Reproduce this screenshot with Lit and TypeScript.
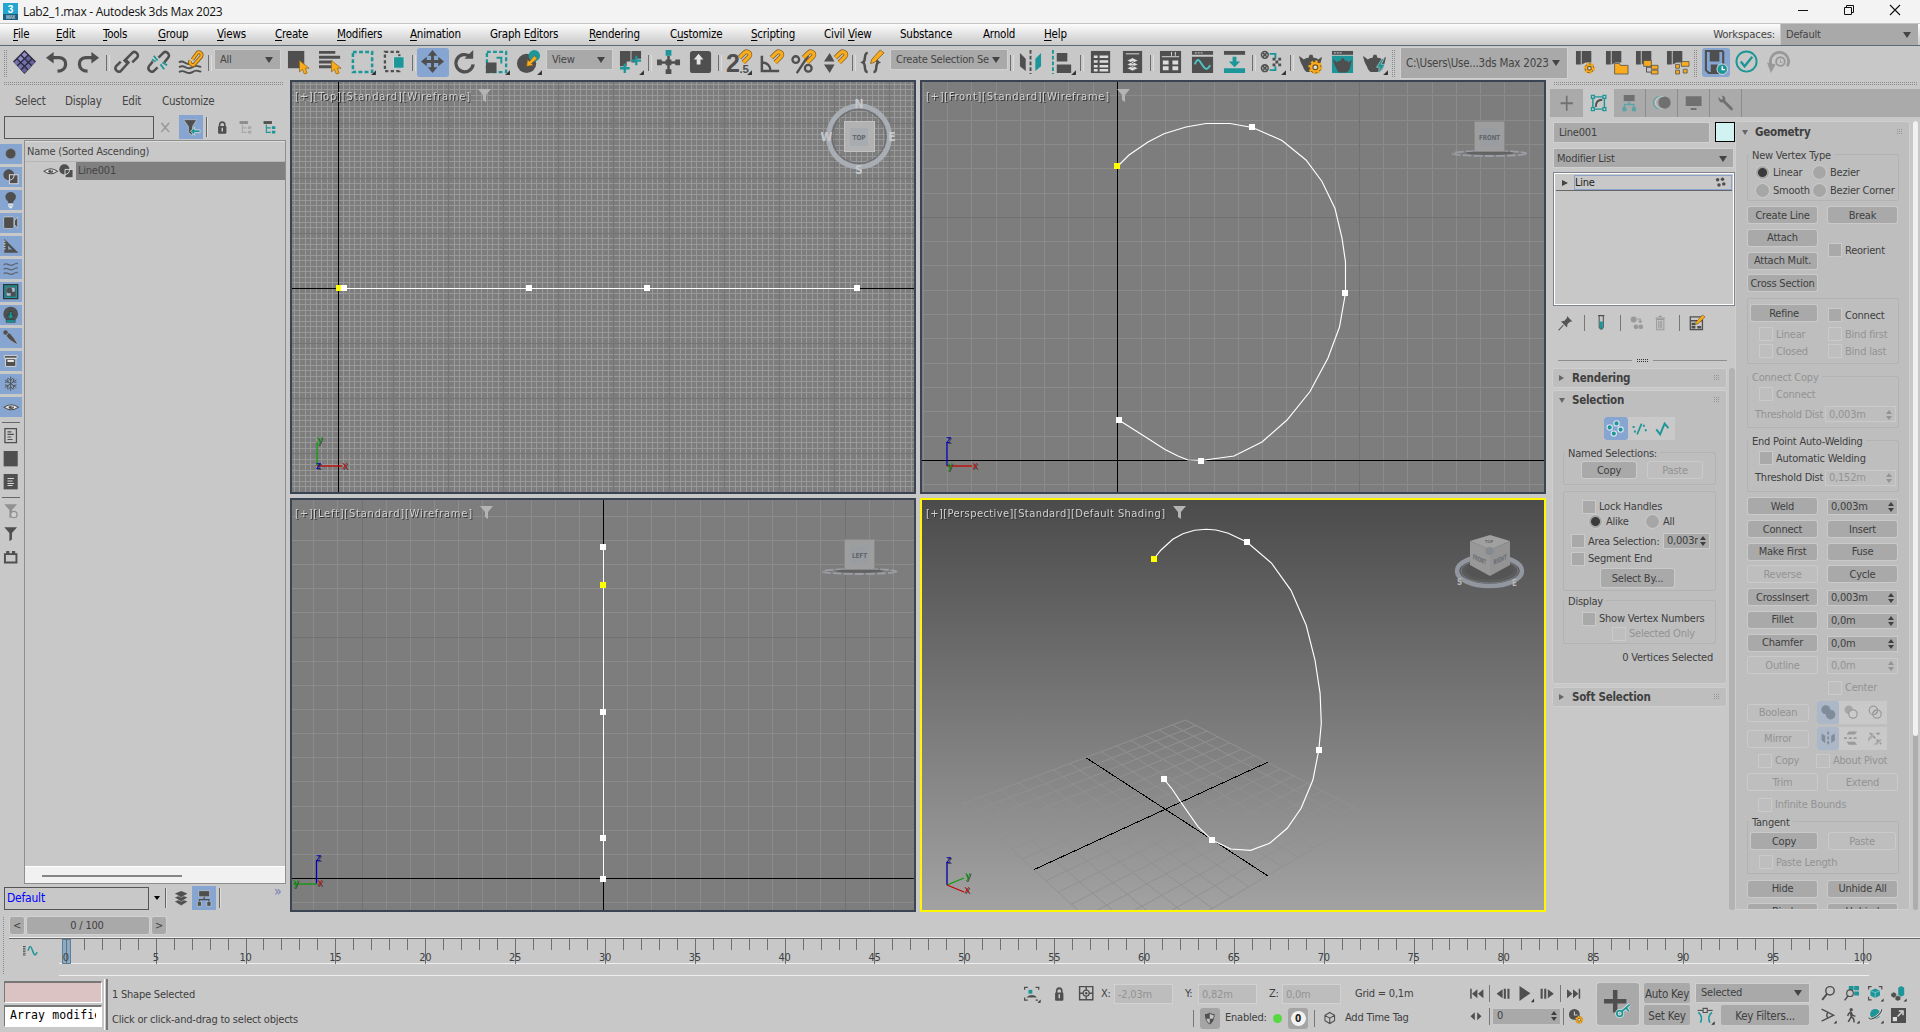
import { LitElement, html, svg, css } from "lit";
import { customElement, property } from "lit/decorators.js";

const D = "#4f4f4f";
const T = "#1c9698";
const Y = "#f9ab1c";
const L = "#d8d8d8";

const teapot = (c: string) => svg`<path d="M0 6l5 4c1-1 3-2 5-2l1-3h3l1 3c3 0 4 1 5 2l4-3-2 9c-1 4-3 6-5 7H8c-2-1-3-3-4-6C2 14 1 11 0 6z" fill=${c}/>`;
const gear = (x: number, y: number, r: number) => svg`<circle cx=${x} cy=${y} r=${r} fill=${Y} stroke="#6b5524" stroke-width="1" /><circle cx=${x} cy=${y} r=${r} fill="none" stroke=${Y} stroke-width="2.600" stroke-dasharray="2.200 2.400"/><circle cx=${x} cy=${y} r=${r * 0.42} fill="#ddd" stroke="#6b5524" stroke-width="1.2"/>`;
const magnet = svg`<path d="M13 8L18 3c3-3 8 1 5 4l-6 6" fill="none" stroke="#7a5a20" stroke-width="4.8"/><path d="M13 8L18 3c3-3 8 1 5 4l-6 6" fill="none" stroke=${Y} stroke-width="3.4"/>`;
const cursor = svg`<path d="M13 11v12l3-3 2 5 3-1-2-5h4z" fill=${Y} stroke="#9a6a10" stroke-width=".8"/>`;
const script = svg`<path d="M1 1h5v14H1zM7 1h10v12h-6l-4 2z" fill=${D}/>`;
const eye = svg`<path d="M0 12Q12-2 24 12Q12 26 0 12z" fill="#e6e6e6" stroke=${D} stroke-width="2.600"/><circle cx="12" cy="12" r="4.600" fill=${D}/><circle cx="13.500" cy="10.500" r="1.500" fill="#fff"/>`;
const shapes = svg`<circle cx="9" cy="9" r="8.500" fill=${D}/><path d="M10 9h13.500v14H10z" fill=${D} stroke=${L} stroke-width="1.6"/><path d="M17.500 9a8.500 8.500 0 0 1-7.500 8.500" fill="none" stroke=${L} stroke-width="1.6"/>`;
const funnel = svg`<path d="M2 2h20l-8 9v10l-4 3V11z" fill=${D}/>`;
const tree = (c: string) => svg`<path d="M1 2h15v5H1z" fill=${D}/><path d="M6 8v14h8M6 14h8" fill="none" stroke=${c} stroke-width="2"/><path d="M16 11h6v5h-6zM16 19h6v5h-6z" fill=${c}/>`;
const flyout = svg`<path d="M26 21v5h-5z" fill="#333"/>`;

const ICONS: Record<string, unknown> = {
  diamond: svg`<path d="M12 0l12 12-12 13L0 12z" fill="#2d2b3a"/><g fill="#8f8cc8"><path d="M12 2l3 3-3 3-3-3zM8 6l3 3-3 3-3-3z"/><path d="M4 10l3 3-3 3-3-3zM12 10l3 3-3 3-3-3zM16 14l3 3-3 3-3-3zM8 14l3 3-3 3-3-3z" fill="#7370b0"/><path d="M16 6l3 3-3 3-3-3zM20 10l3 3-3 3-3-3zM12 18l3 3-3 3-3-3z" fill="#66639c"/></g>`,
  undo: svg`<path d="M7 8h8c9 0 9 14-2 14" fill="none" stroke=${D} stroke-width="3.4"/><path d="M9 2v12L1 8z" fill=${D}/>`,
  redo: svg`<path d="M17 8H9c-9 0-9 14 2 14" fill="none" stroke=${D} stroke-width="3.4"/><path d="M15 2v12l8-6z" fill=${D}/>`,
  link: svg`<g fill="none" stroke=${D} stroke-width="2.6"><path d="M13 14l-3-3 8-8c3-3 8 2 5 5l-5 5"/><path d="M11 10l3 3-8 9c-3 2-7-2-5-5l5-5"/></g>`,
  unlink: svg`<g fill="none" stroke=${D} stroke-width="2.6"><path d="M12 8l5-5c3-3 8 2 5 5l-4 5"/><path d="M6 12l-4 5c-2 3 2 7 5 5l4-4"/></g><path d="M7 6l4 5M14 15l4 5M5 10l4 2M16 13l5 3" stroke=${T} stroke-width="1.8"/>`,
  bind: svg`<g fill="none" stroke=${D} stroke-width="2"><path d="M0 13c5-4 7 4 12 1M0 18c6-4 8 4 14 0s7 1 9-1M0 23c6-4 8 4 14 0s7 1 9-1"/></g><g fill="none" stroke="#8a6018" stroke-width="4"><path d="M14 10l5-7c2-2 6 1 4 4l-7 8c-2 2-6-1-4-4"/></g><path d="M14 10l5-7c2-2 6 1 4 4l-7 8c-2 2-6-1-4-4" fill="none" stroke=${Y} stroke-width="2.2"/>`,
  select: svg`<path d="M1 1h17v18H1z" fill=${D}/>${cursor}`,
  byname: svg`<path d="M0 1h17v3H0zM0 6h22v3H0zM0 11h14v3H0zM0 16h14v3H0z" fill=${D}/>${cursor}`,
  region: svg`<path d="M2 2h20v21H2z" fill="none" stroke=${T} stroke-width="2.6" stroke-dasharray="4 2.4"/>${flyout}`,
  crossing: svg`<path d="M2 2h15v20H2z" fill="none" stroke=${D} stroke-width="2.4" stroke-dasharray="3.4 2.4"/><path d="M11 7h11v12H11z" fill=${T} stroke=${L}/>`,
  move: svg`<path d="M12 0l5 6h-3.500v4.500H18V7l6 5-6 5v-3.500h-4.500V18H17l-5 6-5-6h3.500v-4.500H6V17l-6-5 6-5v3.500h4.500V6H7z" fill=${D}/>`,
  rotate: svg`<path d="M18 7a9 9 0 1 0 3 8" fill="none" stroke=${D} stroke-width="3.4"/><path d="M12 9h9V0z" fill=${D}/>`,
  scale: svg`<path d="M2 2h20v21H2z" fill="none" stroke=${T} stroke-width="2.4" stroke-dasharray="4 2.4"/><path d="M1 13h11v11H1z" fill=${D}/><path d="M12 8h5v6" fill="none" stroke=${T} stroke-width="2"/>${flyout}`,
  place: svg`<circle cx="10" cy="14" r="10" fill=${D}/><circle cx="18" cy="6" r="6" fill=${T}/><path d="M10 17l1-7 2 2 5-6 3 3-6 5 2 2z" fill=${Y} stroke="#7a5a20" stroke-width=".6"/>${flyout}`,
  pivot: svg`<path d="M1 1h11v11H8v5H1zM13 1h10v8h-6v4h-4z" fill=${D}/><path d="M6 14v10M1 19h10M18 6v10M13 11h10" stroke=${T} stroke-width="2.4"/>${flyout}`,
  manip: svg`<path d="M12 6v18M1 13h22" stroke=${D} stroke-width="2.600"/><path d="M9 0h6v6H9z" fill=${T}/><path d="M9 10h6v6H9zM0 10h5v6H0zM19 10h5v6h-5zM9 20h6v5H9z" fill=${D}/>`,
  keyb: svg`<rect x="1" y="1" width="22" height="23" rx="3" fill=${D}/><path d="M10 4l5 6h-3v5H8v-5H5z" fill="#e4e4e4"/>`,
  snap: svg`<text x="-1" y="23" font-size="26" font-weight="bold" fill=${D} font-family="Liberation Sans" textLength="13">2</text><text x="13" y="24" font-size="12" font-weight="bold" fill=${D} font-family="Liberation Sans">.5</text>${magnet}${flyout}`,
  angle: svg`<path d="M3 6v16h18M3 13c6 0 9 4 9 9" fill="none" stroke=${D} stroke-width="2.6"/>${magnet}`,
  percent: svg`<circle cx="5" cy="10" r="3.500" fill="none" stroke=${D} stroke-width="2.4"/><circle cx="18" cy="19" r="3.500" fill="none" stroke=${D} stroke-width="2.400"/><path d="M6 24L18 6" stroke=${D} stroke-width="2.4"/>${magnet}`,
  spin: svg`<path d="M1 12l6-9 5 9zM1 15h11l-5 9z" fill=${D}/>${magnet}`,
  braces: svg`<path d="M7 3c-5 0-1 8-5 10 4 2 0 10 5 10M13 23c5 0 1-8 5-10-2-1-2-3-2-5" fill="none" stroke=${D} stroke-width="2.6"/><path d="M10 14l1-4L20 0l4 3-10 10z" fill=${Y} stroke="#7a5a20" stroke-width=".8"/>`,
  mirror: svg`<path d="M1 3l6 6v13l-6-5z" fill=${D}/><path d="M23 3l-6 6v13l6-5z" fill=${T}/><path d="M12 0v25" stroke=${D} stroke-width="2" stroke-dasharray="4 2"/>`,
  align: svg`<path d="M2 0v25" stroke=${T} stroke-width="2" stroke-dasharray="4 2"/><path d="M6 3h11v9H6zM6 15h15v9H6z" fill=${D}/>${flyout}`,
  table: svg`<path d="M2 1h20v23H2z" fill=${D}/><path d="M5 7h4M5 12h4M5 17h4M5 21h4M11 7h9M11 12h9M11 17h9M11 21h9" stroke="#ddd" stroke-width="2.600"/>`,
  layers: svg`<path d="M2 1h20v23H2z" fill=${D}/><path d="M5 4h14" stroke="#ddd"/><path d="M12 8l6 3-6 3-6-3zM12 12l6 3-6 3-6-3zM12 16l6 3-6 3-6-3z" fill="#ddd" stroke=${D} stroke-width=".8"/>`,
  ribbon: svg`<path d="M1 1h22v23H1z" fill=${D}/><path d="M13 2v4M17 2v4M3 7h18" stroke="#ddd"/><path d="M4 11h6v4H4zM14 11h6v4h-6zM4 17h6v4H4zM14 17h6v4h-6z" fill="#ddd"/>`,
  curve: svg`<path d="M1 1h22v4H1zM1 7h22v17H1z" fill=${D}/><path d="M4 3h8" stroke="#ddd" stroke-dasharray="2 1"/><path d="M4 15c3-8 5-4 8 1s5 5 8 0" fill="none" stroke="#4fc3c5" stroke-width="2"/>`,
  dope: svg`<path d="M1 1h22v4H1z" fill=${D}/><path d="M1 19h22v5H1zM10 7h4v5h4l-6 6-6-6h4z" fill=${T}/>`,
  material: svg`<g stroke=${D} fill="none" stroke-width="1.6"><circle cx="4" cy="5" r="3.5"/><circle cx="4" cy="19" r="3.5"/><path d="M2 3l4 4M6 3L2 7M2 17l4 4M6 17l-4 4"/></g><path d="M9 4h6v5M9 21h6v-4" fill="none" stroke=${T} stroke-width="2"/><path d="M12 8h3v3h-3zM18 8h3v3h-3zM15 11h3v3h-3zM12 14h3v3h-3zM18 14h3v3h-3z" fill=${D}/>${flyout}`,
  teagear: svg`${teapot(D)}${gear(17, 18, 6)}`,
  teaframe: svg`<path d="M1 1h22v4H1z" fill=${D}/><path d="M1 6h22v18H1z" fill=${T}/><g transform="translate(2 4.500) scale(.82)">${teapot(D)}</g><path d="M3 3h8" stroke="#ddd" stroke-dasharray="2 1"/>`,
  teafast: svg`${teapot(D)}<path d="M20 9l-6 9h3l-1 7 7-10h-4l3-6z" fill=${T} stroke=${L} stroke-width=".6"/>${flyout}`,
  sgear: svg`${script}${gear(15, 19, 4.6)}`,
  sfolder: svg`${script}<path d="M10 14h5l1 2h8v9H10z" fill=${Y} stroke=${D} stroke-width=".8"/>`,
  sfolders: svg`${script}<path d="M9 11h8v6H9zM17 16h7v4h-7zM17 21h7v4h-7z" fill=${Y} stroke=${D} stroke-width=".8"/><path d="M12 17v6h5M12 18h5" stroke=${D} fill="none"/>`,
  stree: svg`${script}<path d="M16 12h8v5h-8zM10 15h4v4h-4zM10 21h4v4h-4zM18 20h4v4h-4z" fill=${Y} stroke=${D} stroke-width=".8"/>`,
  save: svg`<path d="M2 1h17l1 1v22H5l-3-3z" fill="none" stroke=${D} stroke-width="2.2"/><path d="M6 2h10v10H6zM7 15h7v9H7z" fill=${D}/><circle cx="19" cy="20" r="5.500" fill=${T} stroke="#ddd"/><path d="M19 17v3.500h3" stroke="#fff" fill="none" stroke-width="1.4"/>`,
  check: svg`<circle cx="12" cy="12" r="10.500" fill="none" stroke=${T} stroke-width="2"/><path d="M6 12l4 5 8-10" fill="none" stroke=${T} stroke-width="2.400"/>`,
  history: svg`<path d="M4 17a9.500 9.500 0 1 1 16 0" transform="translate(1 0)" fill="none" stroke="#999" stroke-width="3"/><path d="M0 13l9 2-5 9z" fill="#999"/><circle cx="14" cy="12" r="4.500" fill="none" stroke="#999" stroke-width="2"/><path d="M14 10v3h2" stroke="#999" fill="none"/>`,
  filter: svg`<path d="M1 1h19l-6 10v13l-6-4v-9z" fill=${D} stroke=${L} stroke-width=".8"/><path d="M25 16h-8v-4l-6 6 6 6v-4h8z" fill=${T} stroke=${L} stroke-width="1.200"/>`,
  lock: svg`<path d="M7 12V8c0-6 10-6 10 0v4" fill="none" stroke=${D} stroke-width="3"/><rect x="4" y="10" width="16" height="13" rx="2" fill=${D}/><path d="M12 13v6" stroke=${L} stroke-width="2.6"/>`,
  treeoff: svg`<g opacity=".5">${tree("#8a8a8a")}</g>`,
  treeon: tree(T),
  eye,
  shapes,
  dot: svg`<circle cx="12" cy="12" r="8" fill=${D} stroke="#999" stroke-width="1"/>`,
  bulb: svg`<path d="M8 15C-1 7 6 0 12 0s13 7 4 15v3H8z" fill=${D}/><path d="M8 19h8M8 22h8M10 24.500h4" stroke="#eee" stroke-width="1.8"/>`,
  camera: svg`<rect x="1" y="3" width="16" height="18" rx="2" fill=${D} stroke="#ddd"/><path d="M18 9l5-6v18l-5-6z" fill=${D} stroke="#ddd"/>`,
  ruler: svg`<path d="M2 1l22 22H2zM8 12v6h6z" fill=${D} fill-rule="evenodd"/><path d="M1 5h3M1 9h3M1 13h3M1 17h3" stroke="#ddd" stroke-width="1.4"/>`,
  waves: svg`<g fill="none" stroke="#5d6470" stroke-width="2"><path d="M1 6c6-5 9 4 15 0s6-2 7-2M1 13c6-5 9 4 15 0s6-2 7-2M1 20c6-5 9 4 15 0s6-2 7-2"/></g>`,
  group: svg`<path d="M1 1h22v22H1z" fill=${T} stroke="#333" stroke-width="2"/><path d="M5 5h14v14H5z" fill="#a9c0dc" stroke="#333"/><circle cx="10" cy="10" r="4.500" fill=${D}/><path d="M12 12h7v7h-7z" fill=${D}/>`,
  xref: svg`<circle cx="12" cy="11" r="11.500" fill=${D}/><path d="M10 7h4v6h4l-6 6-6-6h4zM5 20h14v4H5z" fill=${T} stroke="#222" stroke-width=".7"/>`,
  bone: svg`<circle cx="4" cy="4" r="3.500" fill=${D}/><path d="M5 9l4-5c5 4 11 12 14 19C15 19 9 15 5 9z" fill=${D} stroke="#ddd" stroke-width=".5"/>`,
  container: svg`<path d="M2 4h20v4H2zM4 9h16v12H4z" fill=${D} stroke="#eee" stroke-width="1.200"/><path d="M7 11h10v3H7z" fill="#eee"/>`,
  frozen: svg`<path d="M12 1v22M3 6l18 12M21 6L3 18M8 3l4 4 4-4M8 21l4-4 4 4M3 10l5-1-1-5M21 10l-5-1 1-5M3 14l5 1-1 5M21 14l-5 1 1 5" stroke=${D} fill="none" stroke-width="1.4"/>`,
  docline: svg`<path d="M3 1h18v22H3z" fill="none" stroke=${D} stroke-width="2"/><path d="M7 6h6M7 10h10M7 14h6M7 18h8" stroke=${D} stroke-width="1.8"/>`,
  block: svg`<path d="M1 0h22v24H1z" fill=${D}/>`,
  docdark: svg`<path d="M1 0h22v24H1z" fill=${D}/><path d="M7 7h10M7 11h8M7 15h10M7 18h8" stroke=${L} stroke-width="1.6"/>`,
  funnelgear: svg`<g opacity=".45">${funnel}<circle cx="17" cy="18" r="5" fill=${L} stroke=${D} stroke-width="2"/></g>`,
  funnel,
  brick: svg`<path d="M3 8h18v13H3z" fill="none" stroke=${D} stroke-width="3"/><path d="M5 3h5v5H5zM14 3h5v5h-5z" fill=${D}/>`,
  stack: svg`<g fill=${D} stroke=${L} stroke-width=".7"><path d="M12 13l10 4-10 6-10-6z"/><path d="M12 7l10 4-10 6-10-6z"/><path d="M12 1l10 4-10 6L2 5z"/></g>`,
  hier: svg`<path d="M4 1h16v9H4zM2 17h6v7H2zM16 17h6v7h-6z" fill=${D} stroke="#ddd" stroke-width=".8"/><path d="M12 10v4M5 17v-3h14v3" fill="none" stroke=${D} stroke-width="1.8"/>`,
  plus: svg`<path d="M12 1v22M1 12h22" stroke="#707070" stroke-width="3"/>`,
  modify: svg`<g fill="none" stroke=${T}><path d="M4 4h16v17H4z" stroke-width="2"/><path d="M2 2h4v4H2zM18 2h4v4h-4zM2 19h4v4H2zM18 19h4v4h-4z" fill="#ccc" stroke-width="1.8"/></g><path d="M8 18c0-6 3-10 9-10" fill="none" stroke=${D} stroke-width="2.600"/>`,
  hierarchy: svg`<path d="M4 0h16v9H4z" fill="#707070"/><path d="M12 9v5M5 19v-5h14v5" fill="none" stroke="#5ba3a4" stroke-width="2"/><path d="M2 18h6v6H2zM16 18h6v6h-6z" fill="#5ba3a4"/>`,
  motion: svg`<circle cx="9" cy="12" r="8.500" fill="none" stroke="#5ba3a4" stroke-width="1.500"/><circle cx="12" cy="12" r="8.500" fill="none" stroke="#ddd"/><circle cx="16" cy="12" r="8.500" fill="#707070"/>`,
  display: svg`<path d="M1 2h22v14H1zM8 19h8v3H8z" fill="#707070"/>`,
  wrench: svg`<path d="M2 3l4 4 3-2-2-4c4 0 6 3 5 7l11 11c1 3-1 4-3 3L9 11C5 12 2 9 2 3z" fill="#707070"/>`,
  pin: svg`<path d="M1 24l8-9" stroke="#555" stroke-width="1.8"/><path d="M5 9l10 10 1-6 5-4 3 0-9-9v3l-4 5z" fill="#555"/>`,
  tube: svg`<path d="M6 1h12M8 1v18q4 6 8 0V1" fill="none" stroke=${D} stroke-width="2"/><path d="M9 10h6v10q-3 4-6 0z" fill=${T}/>`,
  unique: svg`<g fill="#999"><circle cx="6" cy="6" r="5"/><circle cx="10" cy="18" r="4"/><circle cx="18" cy="18" r="4"/><path d="M12 4h6v4h3l-4 4-4-4h3V6h-4z"/></g>`,
  trash: svg`<path d="M3 5h18M9 2h6" stroke="#999" stroke-width="2"/><path d="M5 7h14v16H5zM9 9v12M12 9v12M15 9v12" fill="none" stroke="#999" stroke-width="1.800"/>`,
  config: svg`<path d="M2 3h19v20H2zM2 9h19M5 13h4v2H5zM5 18h4v2H5zM14 18h4v2h-4z" fill="none" stroke=${D} stroke-width="2"/><path d="M10 15l1-4L21 0l4 3-10 10z" fill=${Y} stroke="#7a5a20"/>`,
  verts4: svg`<g fill=${D}><circle cx="6" cy="6" r="4"/><circle cx="17" cy="5" r="4"/><circle cx="9" cy="18" r="4"/><circle cx="20" cy="16" r="4"/></g>`,
  vertex: svg`<g fill=${T} stroke="#dfe6ee" stroke-width="1.600"><circle cx="14" cy="5" r="3.900"/><circle cx="4" cy="11" r="3.900"/><circle cx="20" cy="14" r="3.900"/><circle cx="10" cy="20" r="3.900"/></g>`,
  segment: svg`<path d="M8 21l7-17" stroke=${T} stroke-width="2.600"/><path d="M1 8h3v3H1zM3 15h3v3H3zM17 6h3v3h-3zM20 13h3v3h-3z" fill=${T}/>`,
  spline: svg`<path d="M2 13l6 8 7-17 6 7" fill="none" stroke=${T} stroke-width="3"/>`,
  union: svg`<circle cx="8" cy="8" r="7.500" fill="#808c9a"/><circle cx="16" cy="16" r="8" fill="#808c9a"/><path d="M8 15L15 8l3 3-7 7z" fill="#808c9a"/>`,
  subtract: svg`<circle cx="8" cy="8" r="7" fill="#a6a6a6"/><circle cx="15" cy="15" r="7" fill="#cbcbcb" stroke="#999" stroke-width="2"/>`,
  intersect: svg`<g fill="none" stroke="#999" stroke-width="2"><circle cx="9" cy="9" r="7"/><circle cx="15" cy="15" r="7"/><path d="M8 13l5-5M11 16l5-5"/></g>`,
  mirh: svg`<path d="M1 4l6 4v12l-6-4zM23 4l-6 4v12l6-4z" fill="#808c9a"/><path d="M12 1v23" stroke="#808c9a" stroke-width="3" stroke-dasharray="5 3"/>`,
  mirv: svg`<path d="M4 6l4-5h14l-4 5zM4 18l4 5h14l-4-5z" fill="#9a9a9a"/><path d="M0 12h24" stroke="#9a9a9a" stroke-width="3" stroke-dasharray="5 3"/>`,
  mirb: svg`<path d="M0 12L9 3v6l-9 9zM9 23l9-9h6l-9 9z" fill="#9a9a9a" opacity=".6"/><path d="M12 3h9l-4 4z" fill="#9a9a9a"/><path d="M3 3l19 19" stroke="#9a9a9a" stroke-width="3" stroke-dasharray="5 3"/>`,
  isolate: svg`<path d="M1 6V2h5M18 2h5v4M1 18v4h5M18 22h4" fill="none" stroke=${D} stroke-width="2"/><path d="M7 6h6v6H7z" fill=${T}/><path d="M4 18c5-5 12-5 16 0z" fill=${D}/>${flyout}`,
  absolute: svg`<path d="M1 1h22v22H1zM12 1v22M1 12h22" fill="none" stroke=${D} stroke-width="2.400"/><circle cx="12" cy="12" r="5" fill="#c8c8c8" stroke=${D} stroke-width="2"/><circle cx="12" cy="12" r="2" fill=${D}/>`,
  shield: svg`<path d="M12 1c3 2 6 3 10 3 0 10-3 16-10 20C5 20 2 14 2 4c4 0 7-1 10-3z" fill=${D}/><path d="M12 3c3 2 5 3 8 3 0 3 0 5-1 7h-7zM12 13v9c-4-2-6-5-7-9z" fill="#c4c4c4"/>`,
  cube: svg`<path d="M12 1l10 6v11l-10 6-10-6V7zM2 7l10 6 10-6M12 13v11" fill="none" stroke=${D} stroke-width="2.200"/>`,
  start: svg`<path d="M2 3h2.500v18H2zM14 4v16L5 12zM24 4v16l-9-8z" fill=${D}/>`,
  prev: svg`<path d="M11 4v16L1 12zM13 3h3.500v18H13zM19 3h3.500v18H19z" fill=${D}/>`,
  play: svg`<path d="M1 0l21 12L1 25z" fill=${D}/><path d="M29 21v6h-6z" fill="#333"/>`,
  next: svg`<path d="M13 4v16l10-8zM1 3h3.500v18H1zM7 3h3.500v18H7z" fill=${D}/>`,
  end: svg`<path d="M22 3h-2.500v18H22zM10 4v16l9-8zM0 4v16l9-8z" fill=${D}/>`,
  keymode: svg`<path d="M10 3v18L1 12zM15 3v18l9-9z" fill=${D}/>`,
  timecfg: svg`<circle cx="9" cy="9" r="9" fill=${D}/><path d="M9 4v6h5" stroke="#ccc" stroke-width="1.800" fill="none"/>${gear(17, 18, 5.5)}`,
  bigkey: svg`<path d="M8 0h4v8h8v4h-8v8H8v-8H0V8h8z" fill=${D}/><g fill="none" stroke="#e3e3e3" stroke-width="3"><circle cx="14" cy="21" r="2.500"/><path d="M16 19l7-6M20 16l2 3"/></g><g fill="none" stroke=${T} stroke-width="1.600"><circle cx="14" cy="21" r="2.500"/><path d="M16 19l7-6M20 16l2 3"/></g>`,
  tangent: svg`<path d="M5 23c3-6 1-12-3-15M19 23c-3-6-1-12 3-15" fill="none" stroke=${T} stroke-width="2.400"/><path d="M1 5h22" stroke=${D} stroke-width="1.600"/><path d="M9 2h6v6H9z" fill="#ccc" stroke=${D} stroke-width="1.600"/>${flyout}`,
  zoom: svg`<circle cx="15" cy="8" r="7" fill="none" stroke=${D} stroke-width="2.400"/><path d="M10 13l-8 10" stroke=${D} stroke-width="3.200"/>`,
  zoomall: svg`<path d="M8 0h8v7H8zM17 0h8v7h-8zM17 9h8v7h-8z" fill=${T}/><circle cx="10" cy="12" r="5.500" fill="#c8c8c8" stroke=${D} stroke-width="2"/><path d="M7 16l-6 8" stroke=${D} stroke-width="2.600"/>`,
  extents: svg`<path d="M1 6V1h5M18 1h5v5M1 18v5h5" fill="none" stroke=${D} stroke-width="2"/><path d="M12 4l8 4v8l-8 4-8-4V8z" fill=${T}/><path d="M4 8l8 3 8-3M12 11v9" stroke="#a5dcdc" fill="none"/>${flyout}`,
  extall: svg`<path d="M12 3l5-3 5 3v12l-5 3-5-3z" fill=${T}/><path d="M0 13l5-3 4 3v4l-4 3-5-3zM7 18l4-2 5 2v5l-5 2-4-2z" fill=${D} stroke="#c8c8c8" stroke-width=".6"/>${flyout}`,
  fov: svg`<path d="M1 2l20 10L1 22" fill="none" stroke=${D} stroke-width="2.400"/><path d="M12 7c-3 3-3 7 0 10" fill="none" stroke=${D} stroke-width="2.200"/>${flyout}`,
  walk: svg`<circle cx="12" cy="3" r="2.800" fill=${D}/><path d="M12 6l-4 3-2 4M12 7l2 5 5 2M11 7l1 8-5 8M12 14l4 4 1 6" fill="none" stroke=${D} stroke-width="2.600"/>${flyout}`,
  orbit: svg`<circle cx="12" cy="10" r="8.500" fill=${T}/><path d="M1 16c3 8 22-6 22-14" fill="none" stroke="#ddd" stroke-width="4.500"/><path d="M1 16c3 8 22-6 22-14" fill="none" stroke=${D} stroke-width="2"/>${flyout}`,
  maxi: svg`<path d="M0 0h25v25H0z" fill=${D}/><path d="M3 15h7v7H3z" fill="#ddd"/><path d="M11 14l7-7M13 5h7v7" fill="none" stroke="#ddd" stroke-width="2.400"/>`,
  minicurve: svg`<path d="M2 2v20" stroke=${D} stroke-width="4" stroke-dasharray="2 1.600"/><path d="M8 12c3-15 5-8 7 0s4 13 7 3" fill="none" stroke=${T} stroke-width="2.400"/>`,
};

const icon = (name: string, w = 24, h = w) =>
  html`<svg class="ic" width=${w} height=${h} viewBox="0 0 25 25" preserveAspectRatio="none">${ICONS[name]}</svg>`;

const base = css`
  * { box-sizing: border-box; }
  svg { display: block; flex: none; overflow: visible; }
  .arrow { width: 0; height: 0; flex: none; border: 4px solid transparent; border-top: 6px solid #444; border-bottom: 0; }
  .combo { background: #a9a9a9; border: 1px solid #d0d0d0; display: flex; align-items: center; justify-content: space-between; padding: 0 7px 0 5px; flex: none; white-space: nowrap; overflow: hidden; }
  .btn { height: 16px; background: #a9a9a9; box-shadow: 0 0 0 1px #cacaca; border-radius: 2px; display: flex; align-items: center; justify-content: center; white-space: nowrap; flex: none; padding-top: 1px; }
  .btn.off { background: #bebebe; color: #939393; }
  .spin { flex: none; display: flex; flex-direction: column; gap: 2px; width: 6px; }
  .spin::before, .spin::after { content: ""; border: 3px solid transparent; }
  .spin::before { border-bottom: 4px solid currentColor; border-top: 0; }
  .spin::after { border-top: 4px solid currentColor; border-bottom: 0; }
  .num { height: 16px; background: #a9a9a9; border: 1px solid #cacaca; display: flex; align-items: center; justify-content: space-between; padding: 0 3px; white-space: nowrap; flex: none; overflow: hidden; }
  .num.off { background: #bebebe; color: #939393; }
  .check { display: flex; align-items: center; gap: 4px; white-space: nowrap; }
  .check i { width: 12px; height: 12px; background: #a9a9a9; box-shadow: 0 0 0 1px #cacaca; flex: none; }
  .check.off { color: #939393; }
  .check.off i { background: #bebebe; }
  .check span, .radio span { padding-top: 1px; }
  .radio { display: flex; align-items: center; gap: 4px; white-space: nowrap; }
  .radio i { width: 13px; height: 13px; border-radius: 50%; background: #a6a6a6; box-shadow: 0 0 0 1px #c8c8c8; flex: none; }
  .radio.on i { background: radial-gradient(circle, #3b3b3b 4px, #a6a6a6 5px); }
  .dots { background: conic-gradient(#8a8a8a 25%, transparent 0) 0 0 / 2px 2px; flex: none; }
`;

const btn = (t: string, off = false, cls = "") => html`<div class="btn ${off ? "off" : ""} ${cls}">${t}</div>`;
const check = (t: string, off = false, cls = "") => html`<div class="check ${off ? "off" : ""} ${cls}"><i></i><span>${t}</span></div>`;
const radio = (t: string, on = false) => html`<div class="radio ${on ? "on" : ""}"><i></i><span>${t}</span></div>`;
const num = (t: string, off = false, cls = "") => html`<div class="num ${off ? "off" : ""} ${cls}"><span class="val">${t}</span><span class="spin"></span></div>`;

type Pt = [number, number];
const parse = (s: string): Pt[] => s.split(" ").map((p) => p.split(",").map(Number) as Pt);

@customElement("view-port")
class ViewPort extends LitElement {
  @property() kind = "top";
  static styles = [base, css`
    :host { display: block; border: 2px solid #3a4452; background: #7d7d7d; overflow: hidden; }
    :host([kind="persp"]) { border-color: #fff600; background: linear-gradient(#4b4b4b, #a2a2a2); }
    svg { width: 622px; height: 410px; overflow: hidden; font-family: "DejaVu Sans Condensed", "DejaVu Sans", sans-serif; font-stretch: condensed; letter-spacing: 0; }
    .lbl { font-size: 11px; fill: #d2d2d2; filter: drop-shadow(1px 1px 0 #333); }
    .ax { font-size: 11px; filter: drop-shadow(1px 1px 0 #444); }
    .crisp { shape-rendering: crispEdges; }
  `];

  grid(ox: number, oy: number, x: number, y: number, px: number, py: number, minor: string, major: string) {
    const out: unknown[] = [];
    for (const heavy of [false, true]) {
      for (let i = -130; i <= 130; i++) {
        if ((i % 10 === 0) !== heavy) continue;
        const gx = Math.floor(x + i * px);
        const gy = Math.floor(y + i * py);
        const c = heavy ? major : minor;
        if (gx >= ox && gx < ox + 622) out.push(svg`<rect x=${gx} y=${oy} width="1" height="410" fill=${c}/>`);
        if (gy >= oy && gy < oy + 410) out.push(svg`<rect x=${ox} y=${gy} width="622" height="1" fill=${c}/>`);
      }
    }
    return svg`${out}<rect x=${Math.floor(x)} y=${oy} width="1" height="410" fill="#000"/><rect x=${ox} y=${Math.floor(y)} width="622" height="1" fill="#000"/>`;
  }

  floor() {
    const c: Pt[] = [[1185.4, 720], [1369.3, 815], [1129.7, 957.8], [962.3, 804]];
    const [[x0, y0], [x1, y1], [x2, y2], [x3, y3]] = c;
    const dx1 = x1 - x2, dx2 = x3 - x2, sx = x0 - x1 + x2 - x3;
    const dy1 = y1 - y2, dy2 = y3 - y2, sy = y0 - y1 + y2 - y3;
    const den = dx1 * dy2 - dx2 * dy1;
    const g = (sx * dy2 - dx2 * sy) / den, h = (dx1 * sy - sx * dy1) / den;
    const map = (u: number, v: number) => {
      const w = g * u + h * v + 1;
      return [((x1 - x0 + g * x1) * u + (x3 - x0 + h * x3) * v + x0) / w, ((y1 - y0 + g * y1) * u + (y3 - y0 + h * y3) * v + y0) / w];
    };
    const seg = (a: number[], b: number[]) => `M${a[0].toFixed(1)} ${a[1].toFixed(1)}L${b[0].toFixed(1)} ${b[1].toFixed(1)}`;
    let d = "";
    for (let i = 0; i <= 14; i++) d += seg(map(i / 14, 0), map(i / 14, 1)) + seg(map(0, i / 14), map(1, i / 14));
    return svg`<path d=${d} stroke="#919191" stroke-width="1" fill="none"/><path d="M1086.500 758L1267.500 875.700M1267.500 762.300L1033.800 869.700" stroke="#000" stroke-width="1" shape-rendering="crispEdges"/>`;
  }

  marks(pts: Pt[], yellow = 0) {
    return pts.map(([x, y], i) => svg`<rect class="crisp" x=${x - 3} y=${y - 3} width="6" height="6" fill=${i === yellow ? "#ffff00" : "#fff"}/>`);
  }

  line(s: string) {
    return svg`<polyline points=${s} fill="none" stroke="#fff" stroke-width="1.150"/>`;
  }

  label(x: number, y: number, t: string, w: number) {
    return svg`<text class="lbl" x=${x} y=${y + 4} textLength=${w}>${t}</text><path d="M${x + w + 8} ${y - 7}h13l-5 6v7l-3-2v-5z" fill="#b4b4b4"/>`;
  }

  flatCube(cx: number, y: number, t: string) {
    return svg`<ellipse cx=${cx} cy=${y + 32} rx="37" ry="2.500" fill="none" stroke="#9b9ea3" stroke-width="1.800" stroke-dasharray="9 2"/><ellipse cx=${cx} cy=${y + 31.500} rx="24" ry="1.800" fill="#626262"/><rect x=${cx - 15} y=${y} width="30" height="30" fill="#9e9e9e" stroke="#8a8a8a"/><rect x=${cx - 9} y=${y + 6} width="18" height="19" fill="#999ca0"/><text x=${cx} y=${y + 18.500} text-anchor="middle" font-size="7" font-weight="bold" fill="#62666c" textLength=${t.length > 4 ? 21 : 15} lengthAdjust="spacingAndGlyphs">${t}</text>`;
  }

  top() {
    return svg`${this.grid(292, 82, 338.4, 288.3, 5.51, 5.51, "#999999", "#747474")}
      <rect x="341" y="288" width="516" height="1" fill="#fff"/>
      ${this.marks([[339, 288], [344, 288], [529, 288], [647, 288], [857, 288]])}
      <circle cx="859" cy="136.500" r="30.500" fill="none" stroke="#a9adb4" stroke-width="5"/><circle cx="859" cy="136.500" r="27" fill="none" stroke="#676a70"/>
      <g fill="#c6c8cb" font-size="12" font-weight="bold" text-anchor="middle"><text x="859" y="108">N</text><text x="859" y="174">S</text><text x="826.500" y="141">W</text><text x="892" y="141">E</text></g>
      <rect x="844.500" y="121.500" width="30" height="30" fill="#b2b2b2" stroke="#c2c2c2"/><rect x="850" y="128" width="18" height="18" fill="#a8abb0"/>
      <text x="859" y="139.500" text-anchor="middle" font-size="7" font-weight="bold" fill="#62666c" textLength="13" lengthAdjust="spacingAndGlyphs">TOP</text>
      ${this.label(295, 96, "[+][Top][Standard][Wireframe]", 175)}
      <path d="M317 442v24" stroke="#0a9a0a" stroke-width="1.300"/><path d="M317 466h25" stroke="#c80000" stroke-width="1.300"/>
      <text class="ax" x="317" y="443" fill="#0a9a0a">y</text><text class="ax" x="316" y="469" fill="#0000c0">z</text><text class="ax" x="342" y="469" fill="#c01818">x</text>`;
  }

  front() {
    return svg`${this.grid(922, 82, 1117.3, 460.3, 24.22, 24.3, "#8b8b8b", "#717171")}
      ${this.line("1117.5,166.5 1129,155 1148,142 1164,133.8 1186,127 1206,123.5 1230,123.5 1252.5,127.5 1282,140.5 1306,160 1322,181.5 1335,208.5 1342,238 1345.5,262 1345.5,293 1339.5,327 1328,358 1310,391.5 1287,420 1262,442 1234,456 1201,460.5 1188,460 1178,456 1165,449.5 1144,436 1119.5,420.5")}
      ${this.marks([[1117, 166], [1252, 127], [1345, 293], [1201, 461], [1119, 420]])}
      ${this.flatCube(1489.5, 121.5, "FRONT")}
      ${this.label(926, 96, "[+][Front][Standard][Wireframe]", 183)}
      <path d="M947 442v24" stroke="#0000c0" stroke-width="1.300"/><path d="M947 466h25" stroke="#c80000" stroke-width="1.300"/>
      <text class="ax" x="946" y="443" fill="#0000c0">z</text><text class="ax" x="947" y="469" fill="#0a9a0a">y</text><text class="ax" x="972" y="469" fill="#c01818">x</text>`;
  }

  left() {
    return svg`${this.grid(292, 500, 603.5, 878.5, 24.15, 24.15, "#8b8b8b", "#717171")}
      <rect x="603" y="547" width="1" height="332" fill="#fff"/>
      ${this.marks(parse("603,547 603,585 603,712 603,838 603,879"), 1)}
      ${this.flatCube(859.5, 539.5, "LEFT")}
      ${this.label(295, 513, "[+][Left][Standard][Wireframe]", 177)}
      <path d="M316.500 860v24" stroke="#0000c0" stroke-width="1.300"/><path d="M293 884h24" stroke="#0a9a0a" stroke-width="1.300"/>
      <text class="ax" x="316" y="861" fill="#0000c0">z</text><text class="ax" x="293" y="886" fill="#0a9a0a">y</text><text class="ax" x="317" y="886" fill="#c01818">x</text>`;
  }

  persp() {
    return svg`${this.floor()}
      ${this.line("1153.8,559 1161,550 1172.8,539.3 1182.9,533.7 1194.6,530.3 1206,529.3 1216.1,530 1228.3,533.3 1246.8,542 1271.7,563.3 1291,590.3 1306.2,625.3 1315,660 1320.1,693.3 1321.3,723.3 1318.8,750 1312.9,780 1301.1,808.3 1287.2,828.3 1269.6,843.3 1250.6,850.3 1230.8,849 1211.9,840 1198,826.7 1181.2,802.7 1171.5,788.3 1163.9,779")}
      ${this.marks(parse("1154,559 1247,542 1319,750 1212,840 1164,779"))}
      <ellipse cx="1489.500" cy="571" rx="32.500" ry="15" fill="none" stroke="#92969e" stroke-width="4.500"/><ellipse cx="1489.500" cy="571" rx="28.500" ry="12" fill="none" stroke="#777b82"/><ellipse cx="1489.500" cy="570" rx="24" ry="9.500" fill="#545454"/>
      <path d="M1470 541l20-6 20 6-20 9z" fill="#a0a0a0"/><path d="M1470 541l20 9v26l-20-11z" fill="#989898"/><path d="M1510 541l-20 9v26l20-11z" fill="#939393"/>
      <ellipse cx="1489.500" cy="551" rx="4" ry="4" fill="#858a90"/>
      <g font-size="7" font-weight="bold" fill="#666a70"><text transform="translate(1473 559) skewY(24)" textLength="13" lengthAdjust="spacingAndGlyphs">FRONT</text><text transform="translate(1493.500 565) skewY(-24)" textLength="13" lengthAdjust="spacingAndGlyphs">RIGHT</text><text x="1485" y="543" font-size="4">TOP</text></g>
      <g font-size="8" font-weight="bold" fill="#b5b5b5"><text x="1457" y="585">S</text><text x="1512" y="586">E</text></g>
      ${this.label(926, 513, "[+][Perspective][Standard][Default Shading]", 239)}
      <path d="M947 862v23" stroke="#0000a8" stroke-width="1.300"/><path d="M947 885l17-7" stroke="#0a9a0a" stroke-width="1.200"/><path d="M947 885l17 7" stroke="#c80000" stroke-width="1.200"/>
      <text class="ax" x="946" y="863" fill="#0000a8">z</text><text class="ax" x="965" y="879" fill="#0a9a0a">y</text><text class="ax" x="964" y="893" fill="#c01818">x</text>`;
  }

  render() {
    const views: Record<string, [string, () => unknown]> = {
      top: ["292 82 622 410", () => this.top()],
      front: ["922 82 622 410", () => this.front()],
      left: ["292 500 622 410", () => this.left()],
      persp: ["922 500 622 410", () => this.persp()],
    };
    const [box, draw] = views[this.kind];
    return html`<svg viewBox=${box}>${draw()}</svg>`;
  }
}

@customElement("main-toolbar")
class MainToolbar extends LitElement {
  static styles = [base, css`
    :host { display: flex; align-items: center; height: 34px; padding-left: 3px; color: #444; }
    .cell { width: 32px; height: 29px; display: flex; align-items: center; justify-content: center; flex: none; margin-top: -2px; }
    .cell.sm { width: 30.200px; }
    .on { background: #86a5d0; border-radius: 3px; }
    .cell.sv { width: 28px; margin-right: 1px; }
    .sep { width: 6px; flex: none; height: 16px; display: flex; justify-content: center; }
    .sep::before { content: ""; width: 2px; border-left: 1px solid #6e6e6e; border-right: 1px solid #ddd; }
    .dots { width: 4px; height: 27px; margin-right: 2px; }
    .combo { height: 21px; margin: 0 1px; align-self: flex-start; margin-top: 3px; }
    .all { width: 67px; margin-right: 2px; }
    .view { width: 67px; margin-right: 2px; }
    .named { width: 118px; }
    .path { width: 168px; height: 32px; margin-top: 1px; margin-left: 3px; margin-right: 4px; font-size: 11.500px; }
    .gap { width: 3px; flex: none; }
  `];
  render() {
    const c = (n: string, cls = "") => html`<div class="cell ${cls}">${icon(n)}</div>`;
    const s = html`<div class="sep"></div>`;
    return html`<div class="dots"></div>${["diamond", "undo", "redo"].map((n) => c(n))}${s}${["link", "unlink", "bind"].map((n) => c(n))}${s}
      <div class="combo all"><span>All</span><span class="arrow"></span></div>
      ${["select", "byname", "region", "crossing"].map((n) => c(n))}${s}${c("move", "on")}${["rotate", "scale", "place"].map((n) => c(n))}
      <div class="combo view"><span>View</span><span class="arrow"></span></div>
      ${c("pivot")}${s}${c("manip")}${c("keyb")}${s}${["snap", "angle", "percent", "spin"].map((n) => c(n))}${s}${c("braces")}
      <div class="combo named"><span>Create Selection Se</span><span class="arrow"></span></div>
      ${s}${c("mirror")}${c("align")}${s}${c("table")}${c("layers")}${s}${["ribbon", "curve", "dope"].map((n) => c(n))}${s}${c("material")}${s}${["teagear", "teaframe", "teafast"].map((n) => c(n))}
      <div class="dots"></div>
      <div class="combo path"><span>C:\\Users\\Use...3ds Max 2023</span><span class="arrow"></span></div>
      ${["sgear", "sfolder", "sfolders", "stree"].map((n) => c(n, "sm"))}<div class="dots"></div>
      <div class="gap"></div>${c("save", "on sv")}${c("check")}${c("history")}`;
  }
}

@customElement("scene-explorer")
class SceneExplorer extends LitElement {
  static styles = [base, css`
    :host { display: flex; flex-direction: column; width: 290px; height: 832px; color: #444; padding-right: 4px; }
    .dots { height: 4px; margin: 2px 3px 0; }
    .menu { height: 29px; display: flex; align-items: center; padding-left: 15px; font-size: 11.500px; }
    .menu span { white-space: nowrap; }
    .search { display: flex; align-items: center; height: 24px; padding-left: 4px; }
    .box { width: 150px; height: 23px; border: 1px solid #555; }
    .x { width: 22px; text-align: center; color: #999; font-size: 17px; }
    .hot { width: 24px; height: 24px; background: #86a5d0; display: flex; align-items: center; justify-content: center; margin-left: 3px; }
    .bar { width: 2px; height: 20px; border-left: 1px solid #666; border-right: 1px solid #ddd; }
    .bar2 { margin-left: 3px; }
    .lock { margin-left: 8px; margin-right: 10px; }
    .tr { margin-right: 10px; }
    .body { display: flex; height: 744px; margin-top: 1px; }
    .strip { width: 24px; padding-top: 4px; display: flex; flex-direction: column; gap: 3px; }
    .strip div { width: 22px; height: 20px; display: flex; align-items: center; justify-content: center; }
    .strip .on { background: #86a5d0; }
    .strip hr { width: 18px; margin: 2px 2px 0; border: 0; border-top: 1px solid #666; height: 0; }
    .table { width: 262px; border: 1px solid #8e8e8e; display: flex; flex-direction: column; }
    .head { height: 21px; line-height: 20px; padding-left: 2px; border-bottom: 1px solid #b6b6b6; border-top: 1px solid #ddd; }
    .row { height: 18px; display: flex; align-items: center; padding-left: 19px; gap: 1px; }
    .row b { font-weight: normal; flex: 1; height: 18px; margin-left: 1px; line-height: 18px; padding-left: 2px; background: #808080; }
    .scroll { margin-top: auto; height: 17px; background: #f1f1f1; padding: 8px 0 0 17px; border-top: 1px solid #fff; }
    .scroll i { display: block; width: 140px; height: 2px; background: #858585; }
    .foot { display: flex; align-items: center; height: 24px; margin-top: 2px; padding-left: 4px; }
    .layer { width: 145px; height: 23px; border: 1px solid #555; color: #0000ff; line-height: 20px; padding-left: 2px; font-size: 12px; }
    .foot .arrow { margin: 0 5px; border-width: 3px; border-top: 4px solid #000; }
    .st { margin: 0 0 0 6px; }
    .foot .hot { margin-left: 2px; }
    .more { color: #7a7ab4; margin-left: 53px; margin-top: -14px; font-size: 14px; }
  `];
  render() {
    const strip = ["dot", "shapes", "bulb", "camera", "ruler", "waves", "group", "xref", "bone", "container", "frozen"];
    const menu: [string, number][] = [["Select", 50], ["Display", 57], ["Edit", 40], ["Customize", 60]];
    return html`<div class="dots"></div>
      <div class="menu">${menu.map(([t, w]) => html`<span style="width:${w}px">${t}</span>`)}</div>
      <div class="search"><div class="box"></div><div class="x">×</div><div class="hot">${icon("filter", 17)}</div><div class="bar bar2"></div>
        <div class="lock">${icon("lock", 13, 15)}</div><div class="tr">${icon("treeoff", 14)}</div><div>${icon("treeon", 14)}</div></div>
      <div class="body"><div class="strip">
        ${strip.map((n) => html`<div class="on">${icon(n, 16)}</div>`)}<div class="on">${icon("eye", 15, 9)}</div><hr />
        ${["docline", "block", "docdark"].map((n) => html`<div>${icon(n, 16)}</div>`)}<hr />
        ${["funnelgear", "funnel", "brick"].map((n) => html`<div>${icon(n, 16)}</div>`)}
      </div><div class="table"><div class="head">Name (Sorted Ascending)</div>
        <div class="row">${icon("eye", 14, 9)}${icon("shapes", 15)}<b>Line001</b></div>
        <div class="scroll"><i></i></div></div></div>
      <div class="foot"><div class="layer">Default</div><span class="arrow"></span><div class="bar"></div><div class="st">${icon("stack", 17)}</div><div class="hot">${icon("hier", 17)}</div><div class="bar bar2"></div><div class="more">»</div></div>`;
  }
}

@customElement("command-panel")
class CommandPanel extends LitElement {
  static styles = [base, css`
    :host { display: flex; flex-direction: column; width: 370px; height: 830px; color: #404040; overflow: hidden; }
    .dots { height: 4px; margin: 2px 2px 0 3px; }
    .tabs { height: 28px; margin-top: 3px; background: #aaa; display: flex; align-items: center; flex: none; padding-left: 1px; }
    .tabs div { width: 32px; height: 28px; display: flex; align-items: center; justify-content: center; border-right: 1px solid #8c8c8c; }
    .tabs div:nth-child(-n + 2) { border: 0; }
    .tabs .on { background: #c8c8c8; width: 31px; }
    .cols { display: flex; flex: 1; min-height: 0; margin-top: 4px; }
    .a { width: 185px; display: flex; flex-direction: column; flex: none; }
    .name { display: flex; margin: 1px 0 0 3px; gap: 5px; }
    .name .f { width: 157px; height: 21px; background: #a9a9a9; border: 1px solid #d0d0d0; line-height: 20px; padding-left: 5px; }
    .name .sw { width: 20px; height: 20px; background: #d2f2f2; border: 1px solid #000; }
    .ml { width: 181px; height: 20px; margin: 5px 0 0 3px; padding-left: 3px; padding-right: 6px; padding-top: 1px; }
    .list { margin: 4px 0 0 3px; width: 182px; height: 134px; border: 1px solid #7d828c; outline: 1px solid #fff; outline-offset: -2px; padding: 2px; flex: none; }
    .item { height: 16px; border-bottom: 1px solid #666; display: flex; align-items: center; }
    .item .tri { margin: 0 6px 0 6px; border: 3.500px solid transparent; border-left: 6px solid #444; border-right: 0; }
    .item .nm { flex: 1; height: 15px; border: 1px solid #8aa3cc; display: flex; align-items: center; justify-content: space-between; padding: 0 5px 0 0; color: #202020; }
    .tools { display: flex; align-items: center; height: 34px; padding-left: 8px; flex: none; }
    .tools .s { width: 1px; height: 16px; background: #777; }
    .g1 { margin-right: 11px; } .g2 { margin: 0 12px 0 10px; } .g3 { margin: 0 9px 0 9px; } .g4 { margin-right: 12px; } .g5 { margin-left: 9px; }
    .split { height: 16px; margin: 12px 8px 0; display: flex; align-items: center; gap: 4px; flex: none; }
    .split::before, .split::after { content: ""; flex: 1; height: 1px; background: #8e8e8e; }
    .split i { width: 13px; height: 3px; background: conic-gradient(#333 25%, transparent 0) 0 0 / 2px 2px; }
    .rolls { display: flex; flex: 1; min-height: 0; padding-left: 2px; gap: 2px; }
    .stack { width: 175px; display: flex; flex-direction: column; gap: 2px; }
    .roll { background: #bebebe; border: 1px solid #cfcfcf; border-radius: 3px; display: flex; flex-direction: column; flex: none; }
    .rh { height: 18px; display: flex; align-items: center; font-weight: bold; font-size: 11.500px; padding: 0 7px 0 6px; flex: none; }
    .rh .tri { width: 13px; display: flex; }
    .rh .tri i { border: 3px solid transparent; border-left: 5px solid #666; border-right: 0; }
    .rh .tri.open i { border: 3px solid transparent; border-top: 5px solid #666; border-bottom: 0; }
    .rh .grip { margin-left: auto; width: 6px; height: 6px; background: conic-gradient(#8a8a8a 25%, transparent 0) 0 0 / 2px 2px; opacity: .8; }
    .sb { width: 6px; border-radius: 3px; background: #b3b3b3; flex: none; }
    .sb2 { width: 5px; border-radius: 3px; background: #adadad; margin-left: 3px; flex: none; }
    .sb2 i { display: block; height: 615px; background: #f1f1f1; border-radius: 3px; }
    .grp { border: 1px solid #b3b3b3; border-radius: 2px; flex: none; display: flex; flex-direction: column; }
    .gt { height: 14px; line-height: 15px; margin: -7px 0 0 1px; padding: 0 3px; background: #bebebe; align-self: flex-start; white-space: nowrap; flex: none; }
    .gt.off { color: #939393; }
    .row { display: flex; align-items: center; flex: none; }
    .w66 { width: 66px; }
    .b { width: 175px; background: #bebebe; border: 1px solid #cfcfcf; border-radius: 3px; overflow: hidden; padding-left: 11px; flex: none; }
    .b .rh { margin-left: -11px; height: 20px; }
    .b .rh .tri { width: 13px; }
    .grp.g { width: 152px; }
    .two { display: grid; grid-template-columns: 69px 69px; column-gap: 11px; margin-left: 1px; }
    .nv { height: 47px; margin-top: 12px; } .nv .row { height: 18px; padding-left: 8px; } .nv .radio:first-child { width: 57px; }
    .nv .gt { margin-bottom: 1px; }
    .cr { grid-template-rows: repeat(4, 16px); row-gap: 6.800px; margin-top: 6px; }
    .reo { grid-row: 2 / 4; grid-column: 2; padding: 2px 0 0 1px; }
    .rf { height: 66px; margin-top: 7px; } .rf .row { height: 17px; } .rf .row.r1 { height: 16px; margin-top: 6px; margin-bottom: 4.600px; padding-left: 3px; }
    .rf .r1 .check { margin-left: 12px; margin-top: 4px; }
    .c1 { margin-left: 12px; width: 69px; }
    .cc { height: 52px; margin-top: 12px; } .cc .row { height: 20px; } .cc .row + .row { padding-left: 7px; gap: 0; }
    .th { width: 70px; white-space: nowrap; } .cc .num { width: 71px; }
    .wl { grid-template-rows: repeat(8, 16px); row-gap: 6.700px; margin-top: 6px; }
    .wl .num { width: 71px; margin: 1px 0 0 -1px; }
    .ce { height: 23.400px; padding-left: 82px; margin-top: 3px; }
    .bo { height: 26px; padding-left: 1px; } .bo .btn { width: 60px; }
    .seg { display: flex; background: #c9c9c9; margin-left: 9px; height: 23px; }
    .seg div { width: 24px; display: flex; align-items: center; justify-content: center; }
    .seg .on { background: #acb8c8; width: 22px; border-radius: 2px; }
    .cp { height: 20px; margin-top: -1px; } .cp .c1 { width: 58px; }
    .te { margin-top: 3.600px; }
    .ib { height: 24px; margin-top: 2.400px; } .tg { height: 53.500px; margin-top: 4.300px; } .tg .gt { margin-bottom: 4.300px; }
    .tg .r1 { padding-left: 3px; gap: 12px; } .tg .r2 { height: 26px; }
    .hi { margin-top: 6.300px; row-gap: 7px; }
    .sel { height: 294px; }
    .seg2 { background: #c9c9c9; display: flex; width: 71px; height: 23px; margin: 8px auto 0 51px; flex: none; }
    .seg2 div { flex: 1; display: flex; align-items: center; justify-content: center; }
    .seg2 .on { background: #86a5d0; border-radius: 3px; }
    .s1 { width: 153px; height: 33px; margin: 12px 0 0 10px; } .s1 .row { padding: 2px 0 0 18px; gap: 12px; } .s1 .btn { width: 54px; }
    .s2 { width: 153px; height: 100px; margin: 6px 0 0 10px; padding-top: 7px; }
    .s2 .row { height: 15px; }
    .lh { padding-left: 19px; } .al { padding-left: 25px; } .al .radio:first-child { width: 57px; }
    .s2 .ar { height: 20px; padding-left: 8px; margin-top: 2px; } .ar .num { width: 47px; margin-left: auto; margin-right: 5px; }
    .ar .val { overflow: hidden; width: 31px; }
    .se { padding-left: 8px; } .btn.sy { width: 73px; height: 18px; margin: 3px 0 0 37px; }
    .s3 { width: 153px; height: 44px; margin: 9px 0 0 10px; } .s3 .row { height: 15px; } .s3 .gt { margin-bottom: 3px; } .so { padding-left: 49px; }
    .vs { text-align: right; margin: 7px 13px 0 0; }
    .soft { margin-top: 1px; }
  `];
  head(t: string, open: boolean) {
    return html`<div class="rh"><span class="tri ${open ? "open" : ""}"><i></i></span>${t}<span class="grip"></span></div>`;
  }
  render() {
    const weld: [string, string, boolean][] = [["Weld", "#0,003m", false], ["Connect", "Insert", false], ["Make First", "Fuse", false], ["Reverse", "Cycle", true], ["CrossInsert", "#0,003m", false], ["Fillet", "#0,0m", false], ["Chamfer", "#0,0m", false], ["Outline", "#0,0m", true]];
    return html`<div class="dots"></div>
      <div class="tabs"><div>${icon("plus", 14, 17)}</div><div class="on">${icon("modify", 18)}</div><div>${icon("hierarchy", 17)}</div><div>${icon("motion", 18)}</div><div>${icon("display", 18, 17)}</div><div>${icon("wrench", 17)}</div></div>
      <div class="cols"><div class="a">
        <div class="name"><div class="f">Line001</div><div class="sw"></div></div>
        <div class="combo ml"><span>Modifier List</span><span class="arrow"></span></div>
        <div class="list"><div class="item"><span class="tri"></span><div class="nm"><span>Line</span>${icon("verts4", 11)}</div></div></div>
        <div class="tools"><div class="g1">${icon("pin", 15)}</div><div class="s"></div><div class="g2">${icon("tube", 13, 16)}</div><div class="s"></div><div class="g3">${icon("unique", 15)}</div><div class="g4">${icon("trash", 13, 16)}</div><div class="s"></div><div class="g5">${icon("config", 16)}</div></div>
        <div class="split"><i></i></div>
        <div class="rolls"><div class="stack">
          <div class="roll">${this.head("Rendering", false)}</div>
          <div class="roll sel">${this.head("Selection", true)}
            <div class="seg2"><div class="on">${icon("vertex", 17)}</div><div>${icon("segment", 16)}</div><div>${icon("spline", 16)}</div></div>
            <div class="grp s1"><div class="gt">Named Selections:</div><div class="row">${btn("Copy")}${btn("Paste", true)}</div></div>
            <div class="grp s2"><div class="row lh">${check("Lock Handles")}</div><div class="row al">${radio("Alike", true)}${radio("All")}</div>
              <div class="row ar">${check("Area Selection:")}${num("0,003m")}</div><div class="row se">${check("Segment End")}</div>${btn("Select By...", false, "sy")}</div>
            <div class="grp s3"><div class="gt">Display</div><div class="row lh">${check("Show Vertex Numbers")}</div><div class="row so">${check("Selected Only", true)}</div></div>
            <div class="vs">0 Vertices Selected</div>
          </div>
          <div class="roll soft">${this.head("Soft Selection", false)}</div>
        </div><div class="sb"></div></div>
      </div>
      <div class="b">${this.head("Geometry", true)}
        <div class="grp g nv"><div class="gt">New Vertex Type</div><div class="row">${radio("Linear", true)}${radio("Bezier")}</div><div class="row">${radio("Smooth")}${radio("Bezier Corner")}</div></div>
        <div class="two cr">${btn("Create Line")}${btn("Break")}${btn("Attach")}${check("Reorient", false, "reo")}${btn("Attach Mult.")}${btn("Cross Section")}</div>
        <div class="grp g rf"><div class="row r1">${btn("Refine", false, "w66")}${check("Connect")}</div><div class="row">${check("Linear", true, "c1")}${check("Bind first", true)}</div><div class="row">${check("Closed", true, "c1")}${check("Bind last", true)}</div></div>
        <div class="grp g cc"><div class="gt off">Connect Copy</div><div class="row">${check("Connect", true, "c1")}</div><div class="row check off"><span class="th">Threshold Dist</span>${num("0,003m", true)}</div></div>
        <div class="grp g cc"><div class="gt">End Point Auto-Welding</div><div class="row">${check("Automatic Welding", false, "c1")}</div><div class="row"><span class="th">Threshold Dist</span>${num("0,152m", true)}</div></div>
        <div class="two wl">${weld.map(([l, r, off]) => html`${btn(l, off)}${r[0] === "#" ? num(r.slice(1), off) : btn(r)}`)}</div>
        <div class="row ce">${check("Center", true)}</div>
        <div class="row bo">${btn("Boolean", true)}<div class="seg"><div class="on">${icon("union", 15)}</div><div>${icon("subtract", 15)}</div><div>${icon("intersect", 15)}</div></div></div>
        <div class="row bo">${btn("Mirror", true)}<div class="seg"><div class="on">${icon("mirh", 15)}</div><div>${icon("mirv", 15)}</div><div>${icon("mirb", 15)}</div></div></div>
        <div class="row cp">${check("Copy", true, "c1")}${check("About Pivot", true)}</div>
        <div class="two te">${btn("Trim", true)}${btn("Extend", true)}</div>
        <div class="row ib">${check("Infinite Bounds", true, "c1")}</div>
        <div class="grp g tg"><div class="gt">Tangent</div><div class="row r1">${btn("Copy", false, "w66")}${btn("Paste", true, "w66")}</div><div class="row r2">${check("Paste Length", true, "c1")}</div></div>
        <div class="two hi">${btn("Hide")}${btn("Unhide All")}${btn("Bind")}${btn("Unbind")}</div>
      </div>
      <div class="sb2"><i></i></div></div>`;
  }
}

@customElement("time-line")
class TimeLine extends LitElement {
  static styles = [base, css`
    :host { display: flex; height: 66px; color: #404040; padding: 5px 0 0 2px; }
    .dots { width: 3px; height: 58px; margin-right: 4px; }
    .col { display: flex; flex-direction: column; }
    .bar { display: flex; gap: 3px; height: 17px; margin-left: 1px; }
    .bar div { background: #a9a9a9; border-radius: 2px; box-shadow: 0 0 0 1px #d0d0d0; text-align: center; line-height: 17px; width: 14px; }
    .bar .th { width: 122px; padding-right: 2px; }
    .ruler { margin-top: 2px; font-size: 11px; letter-spacing: -0.300px; }
  `];
  render() {
    const x = (f: number) => 66.3 + f * 17.97;
    const f = Array.from({ length: 101 }, (_, i) => i);
    return html`<div class="dots"></div><div class="col"><div class="bar"><div>&lt;</div><div class="th">0 / 100</div><div>&gt;</div></div>
      <svg class="ruler" width="1911" height="42" viewBox="9 936 1911 42" shape-rendering="crispEdges" font-family="DejaVu Sans Condensed, DejaVu Sans" font-stretch="condensed">
        <rect x="9" y="937" width="1911" height="1" fill="#eee"/><rect x="9" y="938" width="1911" height="1" fill="#666"/>
        <rect x="59" y="963" width="1810" height="1" fill="#eee"/><rect x="59" y="975" width="1810" height="1" fill="#eee"/>
        <rect x="62.500" y="939.500" width="8" height="24" fill="#8aabc4" stroke="#5d7f99"/>
        ${f.map((i) => svg`<rect x=${Math.floor(x(i))} y="939" width="1" height=${i % 5 === 0 ? 25 : 11} fill="#6b7070"/>`)}
        ${f.filter((i) => i % 5 === 0).map((i) => svg`<text x=${x(i) - 0.5} y="961" text-anchor="middle" fill="#404040">${i}</text>`)}
        <svg x="23" y="945" width="16" height="12" viewBox="0 0 25 25" preserveAspectRatio="none" shape-rendering="auto">${ICONS.minicurve}</svg>
      </svg></div>`;
  }
}

@customElement("status-bar")
class StatusBar extends LitElement {
  static styles = [base, css`
    :host { display: flex; height: 54px; color: #404040; padding-left: 4px; align-items: flex-start; }
    .listen, .vsep, .msg, .mid, .play, .big, .keys, .nav { flex: none; }
    .listen { width: 98px; padding-top: 3px; display: flex; flex-direction: column; gap: 2px; }
    .listen div { height: 22px; background: #dcc3c3; border: 1px solid #777; border-right-color: #fff; border-bottom-color: #fff; border-width: 2px 1px 1px; }
    .listen .w { background: #fff; font: 11.500px "DejaVu Sans Mono", monospace; letter-spacing: 0.100px; color: #000; line-height: 17px; padding-left: 5px; }
    .listen .w span { display: block; width: 86px; overflow: hidden; white-space: nowrap; }
    .vsep { width: 4px; height: 51px; border-left: 1px solid #fff; border-right: 2px solid #777; margin: 1px 4px 0 2px; }
    .msg { width: 912px; padding: 10px 0 0 0; display: flex; flex-direction: column; gap: 11px; line-height: 14px; }
    .mid { width: 439px; display: flex; flex-direction: column; }
    .mid .r > *, .play .r > * { flex: none; }
    .r { display: flex; align-items: center; height: 23px; }
    .r1 { margin-top: 4px; } .r2 { padding-left: 169px; margin-top: 2px; height: 22px; }
    .i1 { margin-right: 12.500px; } .i2 { margin-right: 13px; } .i3 { margin-right: 7.500px; }
    .lab { width: 13px; }
    .fld { width: 59px; height: 20px; background: #bdbdbd; border: 1px solid #d2d2d2; color: #939393; line-height: 20px; padding-left: 3px; margin-right: 12px; }
    .grid { margin-left: 2px; }
    .s { width: 1px; height: 17px; background: #777; }
    .tg { width: 20px; height: 21px; background: #a5a5a5; border-radius: 3px; display: flex; align-items: center; justify-content: center; margin: 0 5px 0 6px; }
    .en { width: 42px; }
    .tg.z { margin: 0 6px 0 0; }
    .o { width: 15px; height: 15px; border-radius: 50%; background: #f2f2f2; color: #222; font-weight: bold; font-size: 10px; text-align: center; line-height: 15px; }
    .led { width: 9px; height: 9px; border-radius: 50%; background: #55d840; margin: 0 6px; }
    .cb { margin: 0 9px; }
    .play { width: 134px; }
    .p { width: 26px; display: flex; justify-content: center; } .p.n { width: 18px; }
    .play .k2 { height: 20px; margin-top: 1px; }
    .num.fr { width: 69px; height: 17px; margin: 0 2px; padding-left: 4px; }
    .tc { margin-left: 5px; }
    .big { width: 42px; height: 42px; margin: 5px 5px 0 0; background: #a9a9a9; border-radius: 3px; box-shadow: 0 0 0 1px #cfcfcf; display: flex; align-items: center; justify-content: center; }
    .keys { display: grid; grid-template-columns: 46px 114px; gap: 2px 5px; padding-top: 5px; width: 177px; }
    .keys .btn { height: 20px; font-size: 11.500px; }
    .keys .combo { height: 20px; width: 115px; }
    .kf { display: flex; gap: 7px; align-items: center; padding-left: 2px; }
    .kf .btn { width: 88px; }
    .nav { display: grid; grid-template-columns: repeat(4, 23.400px); grid-auto-rows: 22px; align-items: center; padding-top: 4px; }
  `];
  render() {
    const f = (l: string, v: string) => html`<span class="lab">${l}</span><div class="fld">${v}</div>`;
    return html`<div class="listen"><div></div><div class="w"><span>Array modifier</span></div></div><div class="vsep"></div>
      <div class="msg"><span>1 Shape Selected</span><span>Click or click-and-drag to select objects</span></div>
      <div class="mid"><div class="r r1"><div class="i1">${icon("isolate", 16)}</div><div class="i2">${icon("lock", 13, 16)}</div><div class="i3">${icon("absolute", 15)}</div>${f("X:", "-2,03m")}${f("Y:", "0,82m")}${f("Z:", "0,0m")}<span class="grid">Grid = 0,1m</span></div>
        <div class="r r2"><div class="s"></div><div class="tg">${icon("shield", 12, 13)}</div><span class="en">Enabled:</span><div class="led"></div><div class="tg z"><div class="o">0</div></div><div class="s"></div><div class="cb">${icon("cube", 12)}</div><span>Add Time Tag</span></div></div>
      <div class="play"><div class="r r1"><div class="p">${icon("start", 15, 14)}</div><div class="s"></div><div class="p">${icon("prev", 15, 14)}</div><div class="p n">${icon("play", 13, 15)}</div><div class="p">${icon("next", 15, 14)}</div><div class="s"></div><div class="p">${icon("end", 15, 14)}</div></div>
        <div class="r k2"><div class="p">${icon("keymode", 12, 11)}</div><div class="s"></div>${num("0", false, "fr")}<div class="s"></div><div class="tc">${icon("timecfg", 15)}</div></div></div>
      <div class="big">${icon("bigkey", 28)}</div>
      <div class="keys">${btn("Auto Key")}<div class="combo"><span>Selected</span><span class="arrow"></span></div>${btn("Set Key")}<div class="kf">${icon("tangent", 17)}${btn("Key Filters...")}</div></div>
      <div class="nav">${["zoom", "zoomall", "extents", "extall", "fov", "walk", "orbit", "maxi"].map((n) => icon(n, 15))}</div>`;
  }
}

@customElement("app-root")
class AppRoot extends LitElement {
  static styles = [base, css`
    :host { display: flex; flex-direction: column; width: 1920px; height: 1032px; background: #c8c8c8; overflow: hidden; font: 11px/14px "DejaVu Sans Condensed", "DejaVu Sans", sans-serif; font-stretch: condensed; letter-spacing: -0.220px; }
    .title { height: 24px; background: #f3f3f3; border-bottom: 1px solid #c4c4c4; display: flex; align-items: center; padding-left: 3px; gap: 5px; font: 12px "Open Sans", sans-serif; letter-spacing: -0.300px; color: #111; flex: none; }
    .win { margin-left: auto; margin-right: 20px; display: flex; gap: 36px; margin-top: -3px; }
    .menu { height: 22px; background: linear-gradient(#fcfcfc, #c9c9c9); border-bottom: 1px solid #5c6a78; display: flex; align-items: center; padding-left: 13px; color: #000; font-size: 11.500px; flex: none; }
    .menu u { text-underline-offset: 2px; }
    .menu > span { white-space: nowrap; flex: none; margin-top: -1px; }
    .menu > .ws { margin: 0 5px 0 auto; color: #444; font-size: 11.300px; }
    .wc { width: 138px; height: 21px; border: 0; border-left: 1px solid #c8c8c8; margin-right: 2px; color: #444; font-size: 11px; }
    .main { display: flex; height: 832px; flex: none; }
    .vps { display: grid; grid-template-columns: 626px 626px; grid-template-rows: 414px 414px; gap: 4px; margin-right: 4px; flex: none; }
  `];
  render() {
    const menu: [string, number, number][] = [["File", 0, 43], ["Edit", 0, 47], ["Tools", 0, 55], ["Group", 0, 59], ["Views", 0, 58], ["Create", 0, 62], ["Modifiers", 0, 73], ["Animation", 0, 80], ["Graph Editors", 7, 99], ["Rendering", 0, 81], ["Customize", 1, 81], ["Scripting", 0, 73], ["Civil View", 6, 76], ["Substance", -1, 83], ["Arnold", -1, 61], ["Help", 0, 40]];
    return html`<div class="title"><svg width="15" height="17" viewBox="0 0 15 17"><path d="M0 0h15v17H0z" fill="#24a5d0"/><path d="M0 11h15v6H0z" fill="#1b5f7c"/><text x="7.500" y="9.500" font-size="10" font-weight="bold" fill="#fff" text-anchor="middle" font-family="Liberation Sans">3</text><text x="7.500" y="16" font-size="4.500" font-weight="bold" fill="#bcd" text-anchor="middle" font-family="Liberation Sans">MAX</text></svg><span>Lab2_1.max - Autodesk 3ds Max 2023</span>
        <div class="win"><svg width="10" height="10" fill="none" stroke="#111"><path d="M0 5.500h10"/></svg><svg width="10" height="10" fill="none" stroke="#111"><path d="M.5 2.500h7v7h-7zM2.500 2.500v-2h7v7h-2"/></svg><svg width="10" height="10" fill="none" stroke="#111" stroke-width="1.100"><path d="M0 0l10 10M10 0L0 10"/></svg></div></div>
      <div class="menu">${menu.map(([t, k, w]) => html`<span style="width:${w}px">${k < 0 ? t : html`${t.slice(0, k)}<u>${t[k]}</u>${t.slice(k + 1)}`}</span>`)}<span class="ws">Workspaces:</span><div class="combo wc"><span>Default</span><span class="arrow"></span></div></div>
      <main-toolbar></main-toolbar>
      <div class="main"><scene-explorer></scene-explorer>
        <div class="vps">${["top", "front", "left", "persp"].map((k) => html`<view-port kind=${k}></view-port>`)}</div>
        <command-panel></command-panel></div>
      <time-line></time-line><status-bar></status-bar>`;
  }
}
